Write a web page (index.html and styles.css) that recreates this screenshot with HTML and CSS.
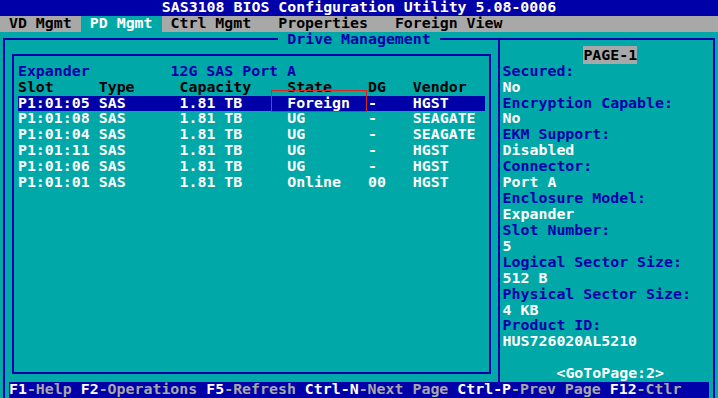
FILE: index.html
```html
<!DOCTYPE html>
<html lang="en">
<head>
    <meta charset="UTF-8">
    <meta name="viewport" content="width=device-width, initial-scale=1.0">
    <title>SAS3108 BIOS Configuration Utility</title>
    <link rel="stylesheet" href="styles.css">
</head>
<body>
    <div class="screen">
        <div class="title-bar">SAS3108 BIOS Configuration Utility 5.08-0006</div>
        <div class="menu-bar">
            <span class="tab tab-vd">VD Mgmt</span>
            <span class="tab tab-pd active">PD Mgmt</span>
            <span class="tab tab-ctrl">Ctrl Mgmt</span>
            <span class="tab tab-props">Properties</span>
            <span class="tab tab-foreign">Foreign View</span>
        </div>

        <!-- box lines -->
        <div class="frame"></div>
        <div class="frame-title">Drive Management</div>
        <div class="divider"></div>
        <div class="drive-box"></div>

        <div class="drive-list">
            <div class="enclosure-row"><span>Expander</span><span>12G SAS Port A</span></div>
            <div class="drive-row head"><span>Slot</span><span>Type</span><span>Capacity</span><span>State</span><span>DG</span><span>Vendor</span></div>
            <div class="drive-row selected"><span>P1:01:05</span><span>SAS</span><span>1.81 TB</span><span>Foreign</span><span>-</span><span>HGST</span></div>
            <div class="drive-row"><span>P1:01:08</span><span>SAS</span><span>1.81 TB</span><span>UG</span><span>-</span><span>SEAGATE</span></div>
            <div class="drive-row"><span>P1:01:04</span><span>SAS</span><span>1.81 TB</span><span>UG</span><span>-</span><span>SEAGATE</span></div>
            <div class="drive-row"><span>P1:01:11</span><span>SAS</span><span>1.81 TB</span><span>UG</span><span>-</span><span>HGST</span></div>
            <div class="drive-row"><span>P1:01:06</span><span>SAS</span><span>1.81 TB</span><span>UG</span><span>-</span><span>HGST</span></div>
            <div class="drive-row"><span>P1:01:01</span><span>SAS</span><span>1.81 TB</span><span>Online</span><span>00</span><span>HGST</span></div>
        </div>

        <div class="info-panel">
            <div class="page-line"><span class="page-tag">PAGE-1</span></div>
            <div class="label">Secured:</div>
            <div>No</div>
            <div class="label">Encryption Capable:</div>
            <div>No</div>
            <div class="label">EKM Support:</div>
            <div>Disabled</div>
            <div class="label">Connector:</div>
            <div>Port A</div>
            <div class="label">Enclosure Model:</div>
            <div>Expander</div>
            <div class="label">Slot Number:</div>
            <div>5</div>
            <div class="label">Logical Sector Size:</div>
            <div>512 B</div>
            <div class="label">Physical Sector Size:</div>
            <div>4 KB</div>
            <div class="label">Product ID:</div>
            <div>HUS726020AL5210</div>
            <div class="goto">&lt;GoToPage:2&gt;</div>
        </div>

        <div class="footer-bar"><span class="key">F1</span>-Help <span class="key">F2</span>-Operations <span class="key">F5</span>-Refresh <span class="key">Ctrl-N</span>-Next Page <span class="key">Ctrl-P</span>-Prev Page <span class="key">F12</span>-Ctlr</div>

        <!-- red marker drawn over the screenshot -->
        <div class="annotation"></div>
    </div>
</body>
</html>
```

FILE: styles.css
```css
body {
    margin: 0;
    padding: 0;
    background-color: #00a8a8;
    font-family: "DejaVu Sans Mono", "Liberation Mono", monospace;
    font-size: 14.9px;
    font-weight: bold;
    line-height: 15.92px;
}
.screen {
    position: relative;
    display: grid;
    grid-template-columns: repeat(80, minmax(0, 1fr));
    grid-template-rows: repeat(25, minmax(0, 1fr));
    width: 718px;
    height: 398px;
    overflow: hidden;
    background-color: #00a8a8;
    color: #ffffff;
    white-space: pre;
}
.title-bar {
    grid-column: 1 / -1;
    grid-row: 1;
    background-color: #0000a8;
    text-align: center;
}
.menu-bar {
    grid-column: 1 / -1;
    grid-row: 2;
    display: grid;
    grid-template-columns: repeat(80, minmax(0, 1fr));
    background-color: #a8a8a8;
    color: #000000;
}
.tab-vd {
    grid-column: 2 / span 7;
}
.tab-pd {
    grid-column: 10 / span 9;
    text-align: center;
}
.tab-ctrl {
    grid-column: 20 / span 9;
}
.tab-props {
    grid-column: 32 / span 10;
}
.tab-foreign {
    grid-column: 45 / span 12;
}
.active {
    background-color: #00a8a8;
    color: #ffffff;
}
.frame {
    grid-column: 1 / -1;
    grid-row: 3 / -1;
    margin: 6px 3px 0 3px;
    border: 2px solid #0000a8;
    border-bottom: none;
}
.frame-title {
    grid-column: 32 / span 18;
    grid-row: 3;
    background-color: #00a8a8;
    color: #0000a8;
    text-align: center;
}
.divider {
    grid-column: 56;
    grid-row: 3 / -1;
    margin: 6px 0 0 4px;
    border-left: 2px solid #0000a8;
}
.drive-box {
    grid-column: 2 / 56;
    grid-row: 4 / 25;
    margin: 6px 3px 8px 3.5px;
    border: 2px solid #0000a8;
}
.drive-list {
    grid-column: 3 / 55;
    grid-row: 5 / 13;
    display: grid;
    grid-template-rows: repeat(8, minmax(0, 1fr));
}
.enclosure-row {
    display: grid;
    grid-template-columns: 17fr 35fr;
    color: #0000a8;
}
.drive-row {
    display: grid;
    grid-template-columns: 9fr 9fr 12fr 9fr 5fr 8fr;
}
.head {
    color: #000000;
}
.selected {
    background-color: #0000a8;
}
.info-panel {
    grid-column: 57 / 80;
    grid-row: 4 / 25;
    display: flex;
    flex-direction: column;
}
.page-line {
    padding-left: 80.8px;
}
.page-tag {
    background-color: #a8a8a8;
    color: #000000;
}
.label {
    color: #0000a8;
}
.goto {
    margin-top: 15.92px;
    padding-left: 53.85px;
}
.footer-bar {
    grid-column: 2 / 80;
    grid-row: 25;
    background-color: #0000a8;
    color: #a8a8a8;
}
.key {
    color: #ffffff;
}
.annotation {
    position: absolute;
    left: 271px;
    top: 90px;
    width: 96px;
    height: 22px;
    box-sizing: border-box;
    border: 1px solid #e02424;
}
```
